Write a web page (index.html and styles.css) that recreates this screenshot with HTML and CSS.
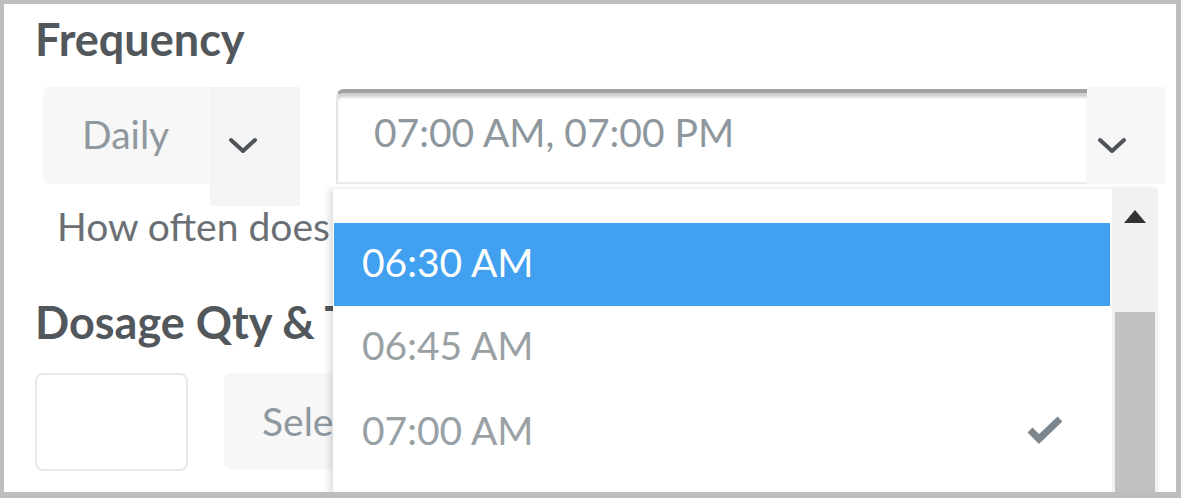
FILE: index.html
```html
<!DOCTYPE html>
<html>
<head>
<meta charset="utf-8">
<link rel="stylesheet" href="styles.css">
</head>
<body>
<div class="frame">
  <h2 class="heading heading-freq">Frequency</h2>
  <div class="row freq-row">
    <div class="select select-daily">
      <span class="select-value">Daily</span>
      <span class="select-arrow">
        <svg width="30" height="18" viewBox="0 0 30 18"><polyline points="3,3 15,14 27,3" fill="none" stroke="#4e5359" stroke-width="4" stroke-linecap="round" stroke-linejoin="round"/></svg>
      </span>
    </div>
    <div class="time-select">
      <div class="time-input">07:00 AM, 07:00 PM</div>
      <span class="time-arrow">
        <svg width="30" height="18" viewBox="0 0 30 18"><polyline points="3,3 15,14 27,3" fill="none" stroke="#4e5359" stroke-width="4" stroke-linecap="round" stroke-linejoin="round"/></svg>
      </span>
      <div class="dropdown">
        <div class="options">
          <div class="option option-selected">06:30 AM</div>
          <div class="option">06:45 AM</div>
          <div class="option">07:00 AM
            <svg class="check" width="38" height="30" viewBox="0 0 38 30"><polyline points="4,16 13,25 34,5" fill="none" stroke="#7b868e" stroke-width="7" stroke-linejoin="miter"/></svg>
          </div>
        </div>
        <div class="scrollbar">
          <div class="scroll-up"></div>
          <div class="scroll-thumb"></div>
        </div>
      </div>
    </div>
  </div>
  <p class="helper">How often does the patient take this medication?</p>
  <h2 class="heading heading-dose">Dosage Qty &amp; Type</h2>
  <div class="row dose-row">
    <div class="qty-input"></div>
    <div class="select select-type"><span class="select-value">Select type</span></div>
  </div>
</div>
</body>
</html>
```

FILE: styles.css
```css
html, body {
  margin: 0;
  padding: 0;
}
body {
  background: #bdbdbd;
  width: 1181px;
  height: 498px;
  overflow: hidden;
  font-family: Lato, "Open Sans", sans-serif;
}
.frame {
  margin: 4px 5px 0 4px;
  height: 488px;
  background: #fff;
  overflow: hidden;
  padding: 0 0 0 31px;
  box-sizing: border-box;
}
.heading {
  margin: 0;
  font-weight: 700;
  font-size: 45px;
  color: #52575c;
  line-height: 1;
}
.heading-freq {
  padding-top: 13px;
}
.row {
  display: flex;
}
.freq-row {
  margin-top: 25px;
  margin-left: 8px;
  height: 97px;
}
.select {
  display: flex;
  background: #f7f7f7;
  border-radius: 6px;
}
.select-daily {
  width: 257px;
  height: 97px;
}
.select-value {
  font-size: 39px;
  color: #8f989e;
  padding-left: 39px;
  line-height: 94px;
  flex: 1;
}
.select-arrow {
  width: 90px;
  height: 119px;
  background: #f4f4f4;
  display: flex;
  justify-content: center;
  padding: 50px 24px 0 0;
  box-sizing: border-box;
}
.time-select {
  position: relative;
  margin-left: 36px;
  width: 829px;
  display: flex;
}
.time-input {
  flex: 1;
  height: 95px;
  box-sizing: border-box;
  border-left: 2px solid #e6e6e6;
  border-bottom: 2px solid #ececec;
  border-top: 4px solid #a2a2a2;
  border-top-left-radius: 8px;
  box-shadow: inset 0 5px 3px -1px rgba(0,0,0,0.2);
  margin-top: 2px;
  font-size: 39px;
  color: #8e979d;
  padding-left: 36px;
  line-height: 78px;
  white-space: nowrap;
}
.time-arrow {
  width: 78px;
  height: 97px;
  background: #f7f7f7;
  display: flex;
  justify-content: center;
  padding: 50px 28px 0 0;
  box-sizing: border-box;
}
.dropdown {
  position: absolute;
  left: -3px;
  top: 102px;
  width: 825px;
  height: 320px;
  background: #fff;
  display: flex;
  box-shadow: -4px 0 6px rgba(0,0,0,0.12);
}
.options {
  flex: 1;
  padding-top: 34px;
  padding-left: 1px;
}
.option {
  position: relative;
  height: 85px;
  font-size: 39px;
  color: #9aa1a5;
  padding-left: 28px;
  line-height: 78px;
}
.option-selected {
  height: 83px;
  background: #42a0f0;
  color: #fff;
}
.check {
  position: absolute;
  right: 46px;
  top: 23px;
}
.scrollbar {
  width: 46px;
  background: #f1f1f1;
  border-left: 2px solid #fff;
  display: flex;
  flex-direction: column;
  align-items: center;
}
.scroll-up {
  margin-top: 21px;
  width: 0;
  height: 0;
  border-left: 11px solid transparent;
  border-right: 11px solid transparent;
  border-bottom: 13px solid #333;
}
.scroll-thumb {
  margin-top: 89px;
  width: 40px;
  flex: 1;
  background: #c1c1c1;
}
.helper {
  margin: 20px 0 0 22px;
  font-size: 39px;
  color: #6b6f74;
  line-height: 44px;
  white-space: nowrap;
}
.heading-dose {
  margin-top: 52px;
}
.dose-row {
  margin-top: 28px;
}
.qty-input {
  width: 153px;
  height: 98px;
  box-sizing: border-box;
  border: 2px solid #e8e8e8;
  border-radius: 8px;
}
.select-type {
  margin-left: 36px;
  width: 400px;
  height: 96px;
}
.select-type .select-value {
  line-height: 96px;
  padding-left: 38px;
}
```
